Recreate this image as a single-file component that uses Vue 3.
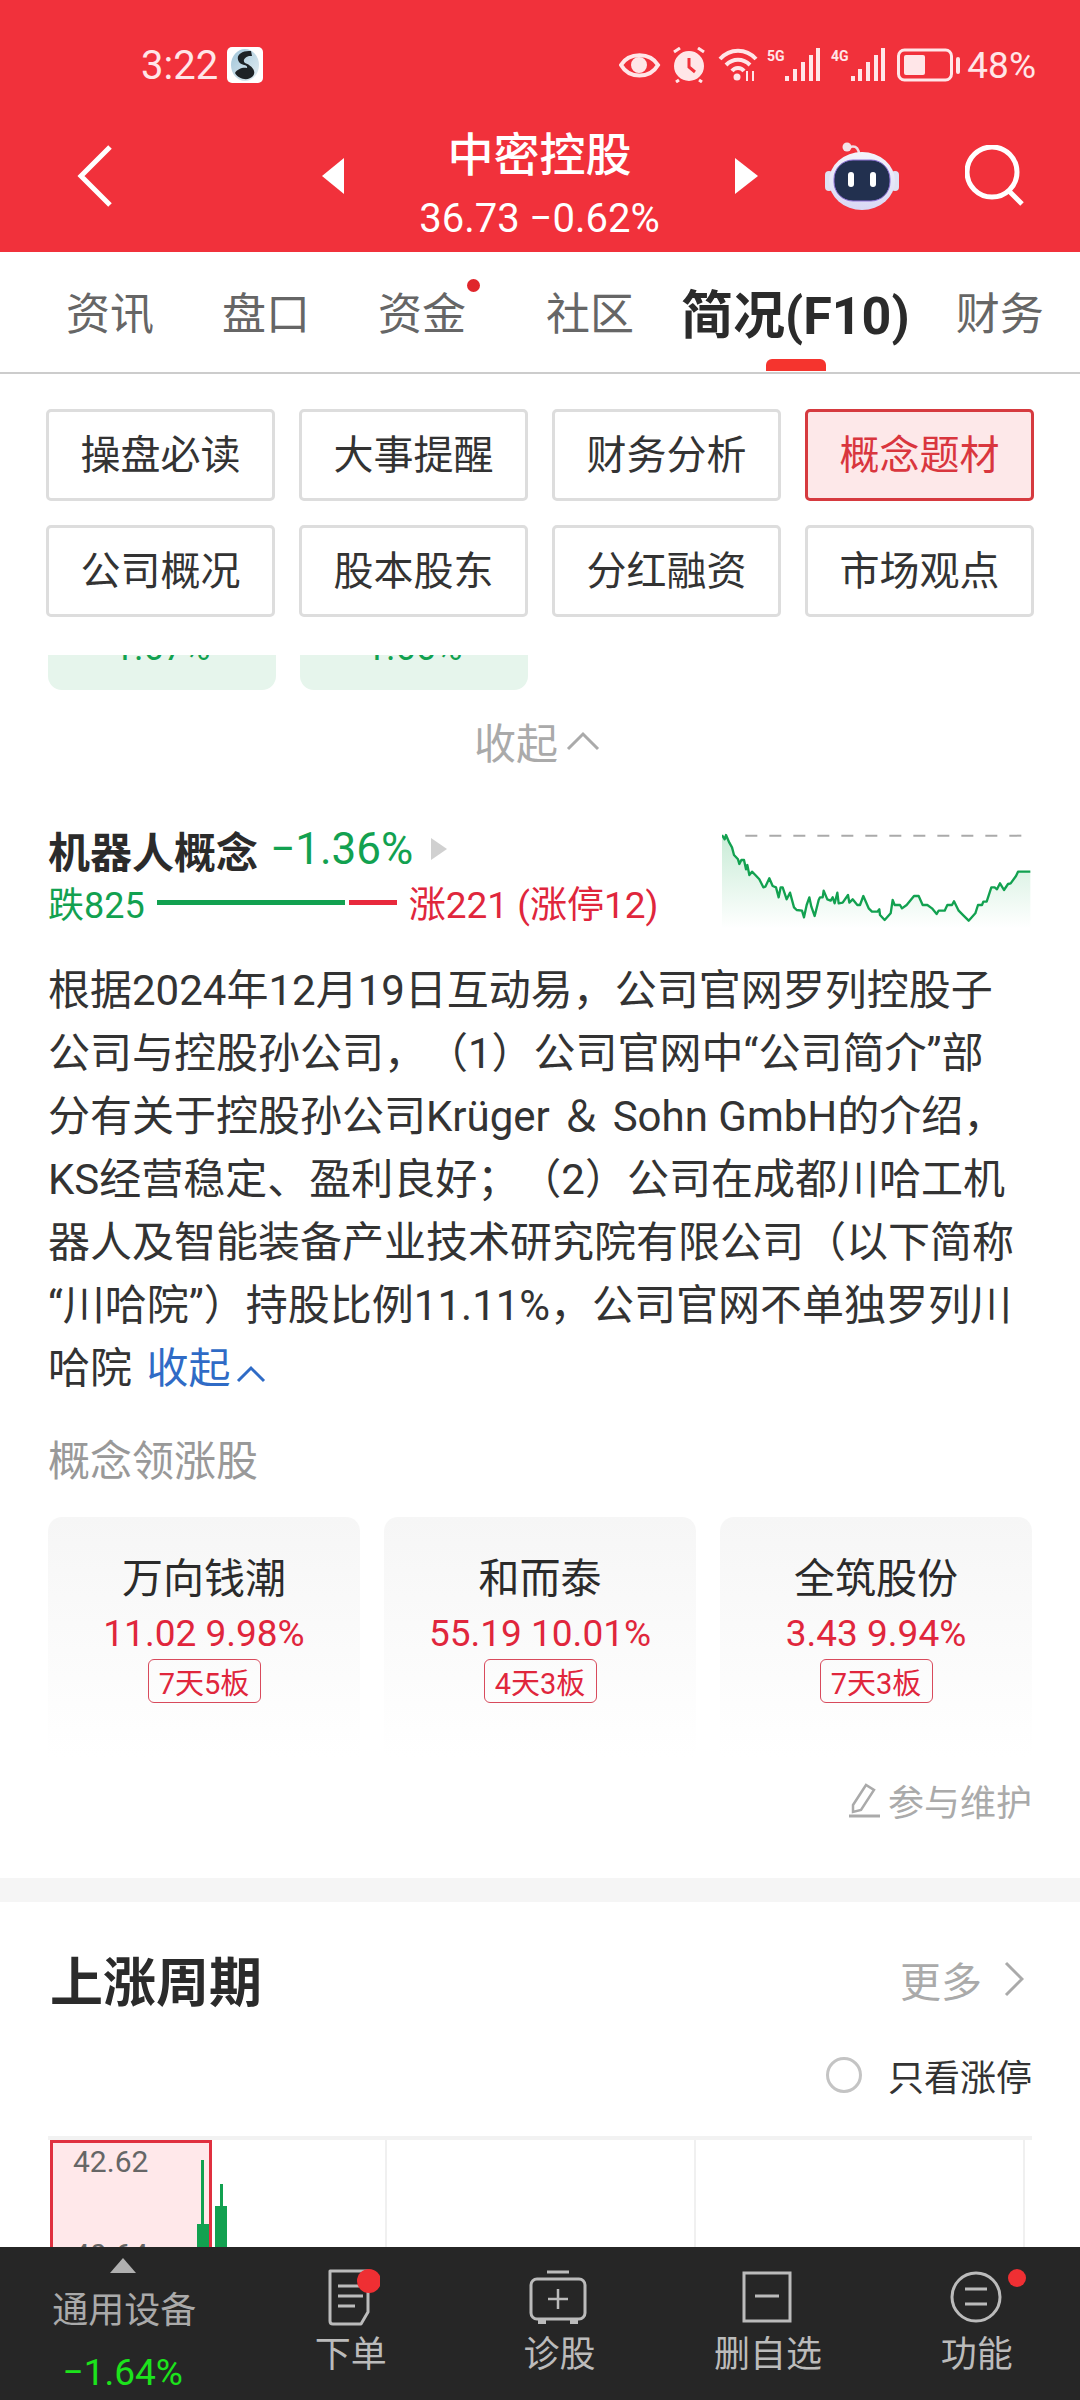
<script setup>
const tabs = ['资讯', '盘口', '资金', '社区', '简况(F10)', '财务']
const filters = ['操盘必读', '大事提醒', '财务分析', '概念题材', '公司概况', '股本股东', '分红融资', '市场观点']
const lines = [
  '根据2024年12月19日互动易，公司官网罗列控股子',
  '公司与控股孙公司，（1）公司官网中“公司简介”部',
  '分有关于控股孙公司Krüger ＆ Sohn GmbH的介绍，',
  'KS经营稳定、盈利良好；（2）公司在成都川哈工机',
  '器人及智能装备产业技术研究院有限公司（以下简称',
  '“川哈院”）持股比例11.11%，公司官网不单独罗列川',
]
const leaders = [
  { name: '万向钱潮', quote: '11.02 9.98%', tag: '7天5板' },
  { name: '和而泰', quote: '55.19 10.01%', tag: '4天3板' },
  { name: '全筑股份', quote: '3.43 9.94%', tag: '7天3板' },
]
const spark = 'M100 75L108 88L112 75L122 98L130 112L136 135L148 148L152 162L158 150L166 150L172 178L176 165L182 195L190 185L200 195L212 208L224 232L230 230L242 205L252 228L262 232L270 262L276 232L282 232L294 268L304 248L316 292L324 300L340 302L346 322L354 285L362 262L368 290L378 318L390 270L394 262L402 262L405 242L416 268L426 272L432 262L438 280L446 248L450 280L462 278L478 255L482 278L492 268L506 285L514 285L524 258L540 295L550 305L566 305L572 298L574 315L588 330L606 310L612 270L618 285L634 285L640 295L654 285L676 258L690 258L702 285L716 285L730 295L744 312L750 302L768 302L776 285L790 285L796 274L810 302L824 316L840 332L860 310L868 285L880 285L884 275L894 275L908 232L918 232L925 238L934 220L946 240L958 222L966 220L982 198L988 185L1025 185'
</script>

<template>
  <div class="page">
    <header class="top">
      <div class="status">
        <span class="time">3:22</span>
        <svg class="app-icon" width="36" height="36" viewBox="0 0 36 36">
          <defs>
            <linearGradient id="ball" x1="0" y1="0" x2="1" y2="1">
              <stop offset="0" stop-color="#9fc4d8" />
              <stop offset="1" stop-color="#e4eef3" />
            </linearGradient>
          </defs>
          <rect width="36" height="36" rx="5" fill="#fff" />
          <ellipse cx="18" cy="18" rx="14" ry="16" fill="url(#ball)" />
          <path d="M24 4C14 3 8 9 12 15C15 19 21 17 20 21C16 20 10 22 8 26C12 33 22 34 26 29C30 24 24 18 18 16C15 14 18 8 25 9Z" fill="#1d2226" />
        </svg>
        <svg class="status-icons" width="342" height="36" viewBox="617 48 342 36">
          <g fill="none" stroke="#ffe6e8" stroke-width="4">
            <path d="M619 66C627 53 648 53 656 66C648 80 627 80 619 66Z" />
            <circle cx="637" cy="66" r="6" fill="#ffe6e8" />
            <circle cx="687" cy="67" r="13" fill="#ffe6e8" />
            <path d="M672 53L678 49M702 53L696 49M677 81L674 83M697 81L700 83" stroke-width="3" />
            <path d="M687 59V68L693 73" stroke="#f1313b" stroke-width="3" />
            <path d="M718 60C728 49 744 49 754 60M724 66C731 59 741 59 748 66M730 72C733 68 739 68 742 72" />
          </g>
          <circle cx="735" cy="78" r="3.5" fill="#ffe6e8" />
          <path d="M745 82V72M751 82V72" stroke="#ffe6e8" stroke-width="2" />
          <g stroke="#ffe6e8" stroke-width="4">
            <path d="M785 82V77M793 82V70M801 82V63M809 82V56M816 82V49" />
            <path d="M851 82V77M858 82V70M866 82V63M874 82V56M881 82V49" />
          </g>
          <text x="765" y="62" class="net">5G</text>
          <text x="829" y="62" class="net">4G</text>
          <rect x="896.5" y="51" width="53" height="30" rx="6" fill="none" stroke="#ffe6e8" stroke-width="3" />
          <rect x="902" y="56" width="21" height="20" rx="2" fill="#ffe6e8" />
          <rect x="954" y="58" width="4" height="17" rx="2" fill="#ffe6e8" />
        </svg>
        <span class="battery">48%</span>
      </div>
      <div class="nav">
        <svg class="back" width="36" height="64" viewBox="0 0 36 64">
          <path d="M33 3L4 32L33 61" fill="none" stroke="#fff" stroke-width="5" />
        </svg>
        <svg class="arrow-left" width="22" height="36" viewBox="0 0 22 36"><path d="M22 0V36L0 18Z" fill="#fff" /></svg>
        <div class="stock">
          <div class="stock-name">中密控股</div>
          <div class="stock-price">36.73 −0.62%</div>
        </div>
        <svg width="23" height="36" viewBox="0 0 23 36"><path d="M0 0V36L23 18Z" fill="#fff" /></svg>
        <svg class="robot" width="78" height="68" viewBox="0 0 78 68">
          <defs>
            <linearGradient id="head" x1="0" y1="0" x2="0" y2="1">
              <stop offset="0" stop-color="#f4f4fb" />
              <stop offset="1" stop-color="#d9d8f4" />
            </linearGradient>
          </defs>
          <path d="M27 5C34 3 36 8 36 13" fill="none" stroke="#f0dde4" stroke-width="2.5" />
          <circle cx="24" cy="5" r="4.5" fill="#f3e3e9" />
          <rect x="2" y="29" width="8" height="20" rx="4" fill="#dfe2f3" />
          <rect x="68" y="29" width="8" height="20" rx="4" fill="#dfe2f3" />
          <ellipse cx="39" cy="39" rx="33" ry="29" fill="url(#head)" />
          <rect x="11" y="18" width="56" height="41" rx="19" fill="#22304f" stroke="#8f72d8" stroke-width="1" />
          <rect x="25" y="30" width="6" height="15" rx="3" fill="#fff" />
          <rect x="47" y="30" width="6" height="15" rx="3" fill="#fff" />
        </svg>
        <svg class="search" width="62" height="62" viewBox="0 0 62 62">
          <circle cx="27" cy="27" r="25" fill="none" stroke="#fff" stroke-width="5" />
          <path d="M44 46L57 59" stroke="#fff" stroke-width="5" />
        </svg>
      </div>
    </header>

    <nav class="tabs">
      <div v-for="t in tabs" :key="t" :class="['tab', { active: t === '简况(F10)', dotted: t === '资金' }]">{{ t }}</div>
    </nav>

    <section class="filters">
      <div v-for="f in filters" :key="f" :class="['filter', { on: f === '概念题材' }]">{{ f }}</div>
    </section>

    <main class="scroll">
      <div class="stubs">
        <div class="stub"><span>1.67%</span></div>
        <div class="stub"><span>1.66%</span></div>
      </div>
      <div class="collapse">
        <span>收起</span>
        <svg width="34" height="20" viewBox="0 0 34 20"><path d="M2 18L17 3L32 18" fill="none" stroke="#aaa" stroke-width="3" /></svg>
      </div>

      <div class="concept">
        <div class="concept-left">
          <div class="concept-head">
            <span class="concept-name">机器人概念</span>
            <span class="concept-pct">−1.36%</span>
            <svg width="16" height="22" viewBox="0 0 16 22"><path d="M0 0V22L16 11Z" fill="#d0d0d0" /></svg>
          </div>
          <div class="concept-stats">
            <span class="fall">跌825</span>
            <i class="bar-fall"></i>
            <i class="bar-rise"></i>
            <span class="rise">涨221 (涨停12)</span>
          </div>
        </div>
        <svg class="spark" width="310" height="100" viewBox="100 60 930 300">
          <defs>
            <linearGradient id="sparkfill" x1="0" y1="0" x2="0" y2="1">
              <stop offset="0" stop-color="#c9ecd7" />
              <stop offset="1" stop-color="#ffffff" />
            </linearGradient>
          </defs>
          <path :d="spark + 'L1025 355L100 355Z'" fill="url(#sparkfill)" />
          <path d="M170 77H1000" stroke="#aaa" stroke-width="6" stroke-dasharray="36 36" />
          <path :d="spark" fill="none" stroke="#12a150" stroke-width="7" stroke-linejoin="round" />
        </svg>
      </div>

      <div class="desc">
        <div v-for="l in lines" :key="l" class="desc-line">{{ l }}</div>
        <div class="desc-line">
          哈院 <span class="link">收起</span>
          <svg class="link-chev" width="30" height="18" viewBox="0 0 30 18"><path d="M2 16L15 3L28 16" fill="none" stroke="#2f6bc6" stroke-width="3" /></svg>
        </div>
      </div>

      <div class="leaders-title">概念领涨股</div>
      <div class="leaders">
        <div v-for="s in leaders" :key="s.name" class="leader">
          <div class="leader-name">{{ s.name }}</div>
          <div class="leader-quote">{{ s.quote }}</div>
          <div class="leader-tag">{{ s.tag }}</div>
        </div>
      </div>

      <div class="maintain">
        <svg width="34" height="36" viewBox="0 0 34 36">
          <path d="M5 23L18 3L26 8L13 28L5 30Z" fill="none" stroke="#aaa" stroke-width="2.5" />
          <path d="M1 34H32" stroke="#aaa" stroke-width="3" />
        </svg>
        <span>参与维护</span>
      </div>

      <div class="band"></div>

      <div class="cycle-head">
        <span class="cycle-title">上涨周期</span>
        <span class="more">更多</span>
        <svg width="20" height="36" viewBox="0 0 20 36"><path d="M2 2L18 18L2 34" fill="none" stroke="#aaa" stroke-width="3" /></svg>
      </div>
      <div class="only">
        <i class="radio"></i>
        <span>只看涨停</span>
      </div>

      <div class="chart">
        <div class="chart-cell first">
          <span class="chart-hi">42.62</span>
          <span class="chart-lo">40.64</span>
        </div>
        <i class="wick w1"></i>
        <i class="body b1"></i>
        <i class="wick w2"></i>
        <i class="body b2"></i>
        <div class="chart-cell c2"></div>
        <div class="chart-cell c3"></div>
        <div class="chart-cell c4"></div>
      </div>
    </main>

    <footer class="bottom">
      <div class="sector">
        <i class="sector-arrow"></i>
        <div class="sector-name">通用设备</div>
        <div class="sector-pct">−1.64%</div>
      </div>
      <div class="action">
        <svg width="60" height="58" viewBox="0 0 60 58">
          <path d="M10 2H48V43L41 55H13C11 55 10 54 10 52Z" fill="none" stroke="#bbb" stroke-width="3" stroke-linejoin="round" />
          <path d="M18 17H39M18 27H43M18 37H35" stroke="#bbb" stroke-width="3" />
          <circle cx="49" cy="12" r="12" fill="#ef2f33" />
        </svg>
        <span>下单</span>
      </div>
      <div class="action">
        <svg width="60" height="58" viewBox="0 0 60 58">
          <path d="M19 3H41" stroke="#bbb" stroke-width="3" />
          <rect x="3" y="10" width="54" height="40" rx="6" fill="none" stroke="#bbb" stroke-width="3" />
          <path d="M30 20V40M20 30H40" stroke="#bbb" stroke-width="2.5" />
          <path d="M10 51H18V55H10ZM42 51H50V55H42Z" fill="#bbb" />
        </svg>
        <span>诊股</span>
      </div>
      <div class="action">
        <svg width="60" height="58" viewBox="0 0 60 58">
          <rect x="7" y="4" width="46" height="48" fill="none" stroke="#bbb" stroke-width="3" />
          <path d="M18 27H42" stroke="#bbb" stroke-width="3" />
        </svg>
        <span>删自选</span>
      </div>
      <div class="action">
        <svg width="60" height="58" viewBox="0 0 60 58">
          <circle cx="30" cy="28" r="24" fill="none" stroke="#bbb" stroke-width="3" />
          <path d="M19 20H41M19 35H41" stroke="#bbb" stroke-width="3" />
        </svg>
        <i class="action-dot"></i>
        <span>功能</span>
      </div>
    </footer>
  </div>
</template>

<style>
body {
  margin: 0;
  background: #fff;
}
</style>

<style scoped>
.page {
  width: 1080px;
  height: 2400px;
  display: flex;
  flex-direction: column;
  overflow: hidden;
  background: #fff;
  font-family: Roboto, "Noto Sans CJK SC", sans-serif;
  color: #333;
  text-spacing-trim: space-all;
}

/* -------------------------- */
/* RED HEADER */
/* -------------------------- */
.top {
  height: 252px;
  flex: none;
  background: #f1313b;
  color: #fff;
}
.status {
  height: 100px;
  padding: 30px 44px 0 141px;
  box-sizing: border-box;
  display: flex;
  align-items: center;
  color: #ffe6e8;
}
.time {
  font-size: 40px;
  width: 86px;
}
.app-icon {
  flex: none;
}
.status-icons {
  margin-left: auto;
  flex: none;
}
.net {
  font-size: 14px;
  font-weight: 700;
  fill: #ffe6e8;
}
.battery {
  margin-left: 6px;
  font-size: 37px;
}
.nav {
  display: flex;
  align-items: center;
  padding-left: 77px;
  height: 152px;
}
.back {
  margin-right: 209px;
}
.stock {
  width: 391px;
  padding-top: 16px;
  text-align: center;
}
.stock-name {
  font-size: 46px;
  font-weight: 500;
  line-height: 64px;
}
.stock-price {
  margin-top: 6px;
  font-size: 40px;
  line-height: 52px;
}
.robot {
  margin-left: 65px;
}
.search {
  margin-left: 64px;
}

/* -------------------------- */
/* TABS */
/* -------------------------- */
.tabs {
  height: 122px;
  flex: none;
  box-sizing: border-box;
  border-bottom: 2px solid #ccc;
  display: flex;
  align-items: center;
  padding: 0 0 2px 66px;
}
.tab {
  position: relative;
  flex: none;
  white-space: nowrap;
  font-size: 44px;
  color: #666;
  margin-right: 68px;
}
.tab:nth-child(3) {
  margin-right: 80px;
}
.tab:nth-child(4) {
  margin-right: 47px;
}
.tab:nth-child(5) {
  margin-right: 46px;
}
.tab.active {
  font-size: 52px;
  font-weight: 700;
  color: #2b2b2b;
}
.tab.active::after {
  content: '';
  position: absolute;
  left: 85px;
  bottom: -22px;
  width: 60px;
  height: 12px;
  border-radius: 6px 6px 0 0;
  background: #f5342e;
}
.tab.dotted::after {
  content: '';
  position: absolute;
  right: -14px;
  top: 0;
  width: 13px;
  height: 13px;
  border-radius: 50%;
  background: #e0262c;
}

/* -------------------------- */
/* FILTER BUTTONS */
/* -------------------------- */
.filters {
  flex: none;
  display: grid;
  grid-template-columns: repeat(4, 1fr);
  gap: 24px;
  padding: 35px 46px 38px;
}
.filter {
  height: 92px;
  box-sizing: border-box;
  border: 3px solid #ddd;
  border-radius: 5px;
  padding-bottom: 6px;
  display: flex;
  align-items: center;
  justify-content: center;
  font-size: 40px;
  color: #333;
}
.filter.on {
  background: #fde8e9;
  border-color: #d63a3f;
  color: #d9363e;
}

/* -------------------------- */
/* SCROLLED CONTENT */
/* -------------------------- */
.scroll {
  flex: 1;
  min-height: 0;
  overflow: hidden;
}
.stubs {
  display: flex;
  gap: 24px;
  padding-left: 48px;
}
.stub {
  width: 228px;
  height: 35px;
  overflow: hidden;
  background: #e6f5ec;
  border-radius: 0 0 14px 14px;
  text-align: center;
  font-size: 36px;
  color: #12a150;
  line-height: 36px;
}
.stub span {
  display: block;
  margin-top: -25px;
}
.collapse {
  height: 106px;
  box-sizing: border-box;
  padding: 0 6px 5px 0;
  display: flex;
  align-items: center;
  justify-content: center;
  gap: 8px;
  font-size: 42px;
  color: #aaa;
}
.concept {
  display: flex;
  justify-content: space-between;
  padding: 28px 48px 0;
}
.concept-head {
  display: flex;
  align-items: center;
  height: 50px;
}
.concept-name {
  font-size: 42px;
  font-weight: 700;
  color: #2b2b2b;
}
.concept-pct {
  font-size: 44px;
  color: #12a150;
  margin: 0 18px 0 12px;
}
.concept-stats {
  display: flex;
  align-items: center;
  margin-top: 3px;
  height: 50px;
  font-size: 36px;
}
.fall {
  color: #12a150;
}
.rise {
  color: #e0263c;
  margin-left: 12px;
  font-size: 37px;
}
.bar-fall {
  width: 188px;
  height: 5px;
  background: #12a150;
  margin-left: 12px;
}
.bar-rise {
  width: 48px;
  height: 5px;
  background: #e8293c;
  margin-left: 4px;
}
.spark {
  margin-top: 6px;
}
.desc {
  padding: 0 48px;
  margin-top: 29px;
}
.desc-line {
  height: 63px;
  line-height: 63px;
  font-size: 42px;
  white-space: nowrap;
  color: #333;
}
.link {
  color: #2f6bc6;
  margin-left: 4px;
}
.link-chev {
  margin-left: 6px;
}
.leaders-title {
  padding: 0 48px;
  margin-top: 34px;
  font-size: 42px;
  line-height: 56px;
  color: #999;
}
.leaders {
  display: grid;
  grid-template-columns: repeat(3, 1fr);
  gap: 24px;
  padding: 27px 48px 0;
}
.leader {
  height: 203px;
  border-radius: 14px 14px 0 0;
  background: linear-gradient(#f6f6f6, #fff);
  display: flex;
  flex-direction: column;
  align-items: center;
  padding-top: 37px;
}
.leader-name {
  font-size: 41px;
  line-height: 50px;
  color: #2b2b2b;
}
.leader-quote {
  margin-top: 5px;
  font-size: 37px;
  line-height: 50px;
  color: #e0263c;
}
.leader-tag {
  margin-top: 0;
  width: 113px;
  height: 44px;
  box-sizing: border-box;
  border: 1.5px solid #d84a5c;
  border-radius: 6px;
  display: flex;
  align-items: center;
  justify-content: center;
  font-size: 29px;
  color: #e0263c;
}
.maintain {
  display: flex;
  justify-content: flex-end;
  align-items: center;
  gap: 6px;
  padding: 17px 48px 0;
  font-size: 36px;
  color: #aaa;
}
.band {
  height: 24px;
  margin-top: 52px;
  background: #f5f5f5;
}
.cycle-head {
  display: flex;
  align-items: center;
  padding: 47px 56px 0 50px;
  height: 60px;
}
.cycle-title {
  font-size: 53px;
  font-weight: 700;
  color: #2b2b2b;
  margin-right: auto;
}
.more {
  font-size: 41px;
  color: #aaa;
  margin-right: 22px;
}
.only {
  display: flex;
  align-items: center;
  justify-content: flex-end;
  padding: 41px 48px 0;
  height: 50px;
  font-size: 36px;
  color: #333;
}
.radio {
  width: 36px;
  height: 36px;
  box-sizing: border-box;
  border: 3px solid #c4c4c4;
  border-radius: 50%;
  margin-right: 26px;
}
.chart {
  position: relative;
  margin: 36px 48px 0;
  height: 300px;
  border-top: 4px solid #f2f2f2;
  display: flex;
}
.chart-cell {
  border-right: 2px solid #f0f0f0;
  box-sizing: border-box;
}
.chart-cell.first {
  position: relative;
  width: 162px;
  margin-left: 2px;
  background: #ffe8ea;
  border: 3px solid #e0303f;
  font-size: 30px;
  color: #666;
}
.c2 {
  width: 175px;
}
.c3 {
  width: 309px;
}
.c4 {
  width: 329px;
}
.chart-hi {
  position: absolute;
  left: 20px;
  top: 1px;
}
.chart-lo {
  position: absolute;
  left: 20px;
  top: 94px;
}
.wick {
  position: absolute;
  width: 3px;
  background: #12a150;
}
.body {
  position: absolute;
  height: 100px;
  width: 12px;
  background: #12a150;
}
.w1 {
  left: 153px;
  top: 20px;
  height: 120px;
}
.b1 {
  left: 149px;
  top: 84px;
}
.w2 {
  left: 172px;
  top: 44px;
  height: 40px;
}
.b2 {
  left: 167px;
  top: 66px;
}

/* -------------------------- */
/* BOTTOM BAR */
/* -------------------------- */
.bottom {
  height: 153px;
  flex: none;
  position: relative;
  background: #262626;
  display: flex;
  color: #bbb;
}
.sector {
  width: 246px;
  display: flex;
  flex-direction: column;
  align-items: center;
  font-size: 36px;
  color: #aaa;
}
.sector-arrow {
  width: 0;
  height: 0;
  margin-top: 11px;
  border-left: 13px solid transparent;
  border-right: 13px solid transparent;
  border-bottom: 15px solid #b0b0b0;
}
.sector-name {
  margin: 13px 0 0 3px;
  line-height: 50px;
}
.sector-pct {
  margin-top: 12px;
  font-size: 37px;
  line-height: 50px;
  color: #1ce31c;
}
.action {
  position: relative;
  width: 209px;
  padding-top: 22px;
  display: flex;
  flex-direction: column;
  align-items: center;
  font-size: 36px;
}
.action span {
  line-height: 50px;
  margin: 3px 0 0 2px;
}
.action-dot {
  position: absolute;
  left: 137px;
  top: 22px;
  width: 18px;
  height: 18px;
  border-radius: 50%;
  background: #ef2f33;
}
</style>
